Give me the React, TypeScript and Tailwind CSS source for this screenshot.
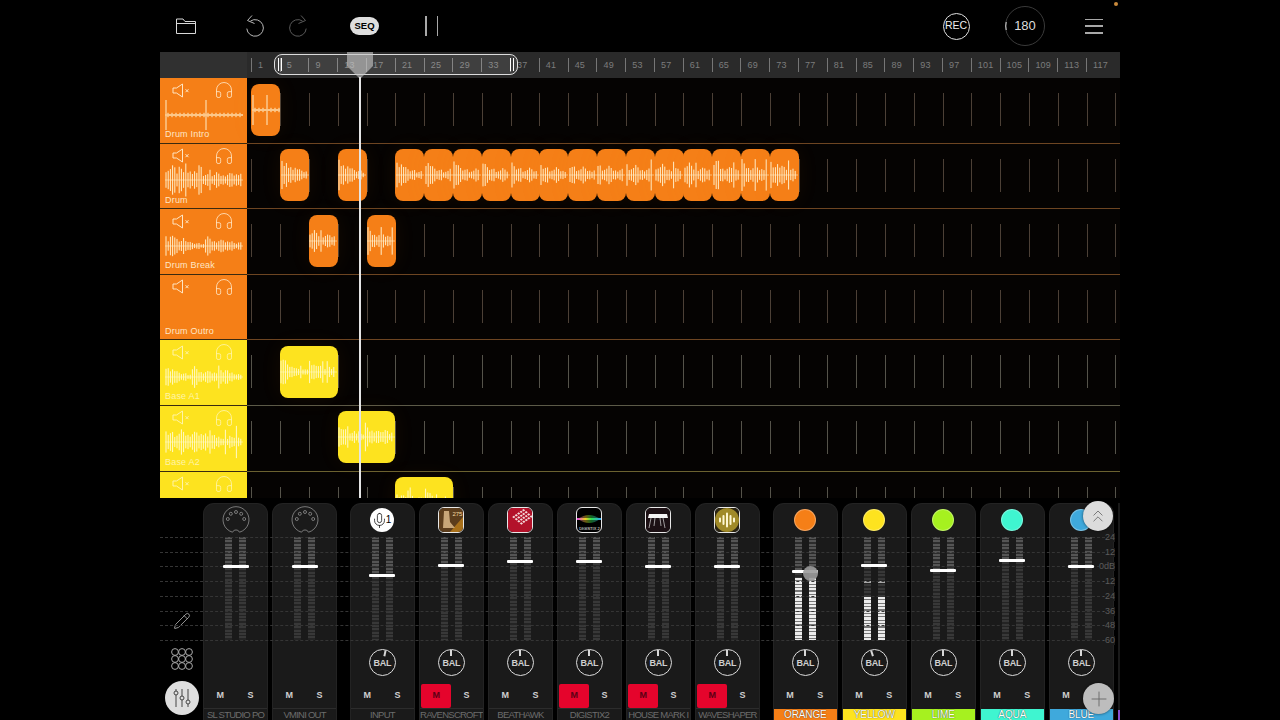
import { ChevronsUp, Headphones, Mic, Pencil, Plus } from "lucide-react";

const BAR = 28.8;
const LANE_OFFSET = 4.8;

type Track = {
  name: string;
  color: string;
  text: string;
  line: string;
  tick: string;
  waveColor: string;
  wave?: { seed: number; amp: number; beats: number; beads?: boolean };
  clips: [number, number][];
};

const orange = "#f57f17";
const yellow = "#fde31f";

const tracks: Track[] = [
  {
    name: "Drum Intro",
    color: orange,
    text: "#ffe6c4",
    line: "#6d4522",
    tick: "#4c4036",
    waveColor: "#ffeec8",
    wave: { seed: 3, amp: 3, beats: 2, beads: true },
    clips: [[0, 1]],
  },
  {
    name: "Drum",
    color: orange,
    text: "#ffe6c4",
    line: "#6d4522",
    tick: "#4c4036",
    waveColor: "#ffeec8",
    wave: { seed: 7, amp: 17, beats: 1 },
    clips: [
      [1, 1],
      [3, 1],
      ...Array.from({ length: 14 }, (_, i): [number, number] => [5 + i, 1]),
    ],
  },
  {
    name: "Drum Break",
    color: orange,
    text: "#ffe6c4",
    line: "#6d4522",
    tick: "#4c4036",
    waveColor: "#ffeec8",
    wave: { seed: 11, amp: 11, beats: 2 },
    clips: [
      [2, 1],
      [4, 1],
    ],
  },
  {
    name: "Drum Outro",
    color: orange,
    text: "#ffe6c4",
    line: "#6d4522",
    tick: "#4c4036",
    waveColor: "#ffeec8",
    clips: [],
  },
  {
    name: "Base A1",
    color: yellow,
    text: "#fff4a8",
    line: "#5c5a48",
    tick: "#55534a",
    waveColor: "#fff9c8",
    wave: { seed: 17, amp: 13, beats: 3 },
    clips: [[1, 2]],
  },
  {
    name: "Base A2",
    color: yellow,
    text: "#fff4a8",
    line: "#6b6230",
    tick: "#55534a",
    waveColor: "#fff9c8",
    wave: { seed: 23, amp: 17, beats: 1 },
    clips: [[3, 2]],
  },
  {
    name: "",
    color: yellow,
    text: "#fff4a8",
    line: "#6b6230",
    tick: "#55534a",
    waveColor: "#fff9c8",
    clips: [[5, 2]],
  },
];

type Strip = {
  label: string;
  icon: string;
  fader: number;
  bal?: number;
  muted?: boolean;
  color?: string;
  lit?: number;
  peak?: number;
  touch?: boolean;
};

const groupA: Strip[] = [
  { label: "SL STUDIO PO", icon: "midi", fader: 565 },
  { label: "VMINI OUT", icon: "midi", fader: 565 },
];

const groupB: Strip[] = [
  { label: "INPUT", icon: "mic", fader: 574, bal: 12 },
  { label: "RAVENSCROFT", icon: "raven", fader: 564, bal: 0, muted: true },
  { label: "BEATHAWK", icon: "beathawk", fader: 560, bal: 0 },
  { label: "DIGISTIX2", icon: "digistix", fader: 560, bal: 0, muted: true },
  { label: "HOUSE MARK I", icon: "house", fader: 565, bal: 0, muted: true },
  { label: "WAVESHAPER", icon: "wave", fader: 565, bal: 0, muted: true },
];

const groupC: Strip[] = [
  { label: "ORANGE", icon: "dot", color: "#f57f17", fader: 570, bal: 0, lit: 578, touch: true },
  { label: "YELLOW", icon: "dot", color: "#fde31f", fader: 564, bal: -18, lit: 597, peak: 581 },
  { label: "LIME", icon: "dot", color: "#a6f11f", fader: 569, bal: 0 },
  { label: "AQUA", icon: "dot", color: "#3ff5d0", fader: 559, bal: 0 },
  { label: "BLUE", icon: "dot", color: "#3fa9dc", fader: 565, bal: 0 },
];

const dbMarks = ["24", "12", "0dB", "-12", "-24", "-36", "-48", "-60"];

function rnd(n: number) {
  const v = Math.sin(n * 12.9898) * 43758.5453;
  return v - Math.floor(v);
}

function Wave({
  w,
  h,
  seed,
  amp,
  beats,
  beads,
  color,
}: {
  w: number;
  h: number;
  seed: number;
  amp: number;
  beats: number;
  beads?: boolean;
  color: string;
}) {
  const step = beads ? 2 : 2.2;
  const count = Math.floor(w / step);
  const mid = h / 2;
  const lines = Array.from({ length: count }, (_, i) => {
    const t = i / count;
    const phase = (t * beats) % 1;
    const r = rnd(seed + i);
    let a = amp * (0.3 + 0.7 * Math.exp(-2.2 * phase)) * (0.35 + 0.65 * r);
    if (rnd(seed * 3 + i) > 0.9) a = amp * (0.6 + 0.4 * r);
    if (beads) a = i % 2 ? 2.2 : 1;
    if (beads && phase < 0.03) a = amp * 5;
    return { x: i * step + 1, a };
  });
  return (
    <svg width={w} height={h} viewBox={`0 0 ${w} ${h}`} className="block">
      <line x1="0" x2={w} y1={mid} y2={mid} stroke={color} strokeWidth="0.6" />
      {lines.map((l) => (
        <line
          key={l.x}
          x1={l.x}
          x2={l.x}
          y1={mid - l.a}
          y2={mid + l.a}
          stroke={color}
          strokeWidth="1"
        />
      ))}
    </svg>
  );
}

function SpeakerMuted({ color }: { color: string }) {
  return (
    <svg width="18" height="15" viewBox="0 0 18 15" fill="none" stroke={color}>
      <path d="M1 5 H4.5 L10.5 1 V14 L4.5 10 H1 Z" strokeWidth="1" strokeLinejoin="round" />
      <path d="M13.5 6.2 L16.5 9.2 M16.5 6.2 L13.5 9.2" strokeWidth="1" />
    </svg>
  );
}

function TrackHeader({ track }: { track: Track }) {
  return (
    <div
      className="w-[86.5px] shrink-0 h-full flex flex-col pt-[4px] overflow-hidden border-b border-b-[#3a2a10]"
      style={{ backgroundColor: track.color }}
    >
      <div className="h-[16px] flex items-center justify-between pl-[12px] pr-[12.5px]">
        <SpeakerMuted color={track.text} />
        <Headphones size={20} strokeWidth={1} color={track.text} />
      </div>
      <div className="h-[31px] mt-[1px] pl-[5px] flex items-center">
        {track.wave && (
          <Wave w={78} h={36} color={track.waveColor} {...track.wave} />
        )}
      </div>
      <div
        className="text-[9px] leading-[9px] pl-[5px] tracking-[0.2px]"
        style={{ color: track.text }}
      >
        {track.name}
      </div>
    </div>
  );
}

function Lane({ track, row }: { track: Track; row: number }) {
  return (
    <div className="relative flex-1 h-full border-b" style={{ borderColor: track.line }}>
      {Array.from({ length: 31 }, (_, i) => (
        <div
          key={i}
          className="absolute top-[15px] h-[33px] w-px"
          style={{ left: LANE_OFFSET + i * BAR, backgroundColor: track.tick }}
        />
      ))}
      {track.clips.map(([start, len], i) => (
        <div
          key={i}
          className="absolute top-[5.5px] h-[52px] rounded-[8px] flex items-center justify-center overflow-hidden shadow-[0_0_22px_rgba(245,127,23,0.07)]"
          style={{
            left: LANE_OFFSET + start * BAR,
            width: len * BAR + 0.2,
            backgroundColor: track.color,
          }}
        >
          <Wave
            w={Math.round(len * BAR) - 1}
            h={36}
            seed={row * 13 + start}
            amp={row === 0 ? 3 : row === 2 ? 14 : 16}
            beats={row === 0 ? 2 : len}
            beads={row === 0}
            color={track.waveColor}
          />
        </div>
      ))}
    </div>
  );
}

function Ruler() {
  return (
    <div className="h-[26px] flex bg-[#2a2a2a]">
      <div className="w-[86.5px] shrink-0 bg-[#303030]" />
      <div className="flex-1 flex pl-[4.4px] items-center overflow-hidden">
        {Array.from({ length: 30 }, (_, i) => (
          <div key={i} className="w-[28.8px] shrink-0 h-[14px] border-l-[1.5px] border-l-[#767676] pl-[6px] flex items-center">
            <span className="text-[9px] leading-none text-[#7c7c7c] tracking-[0.2px]">
              {i * 4 + 1}
            </span>
          </div>
        ))}
      </div>
    </div>
  );
}

function MidiIcon() {
  return (
    <svg width="28" height="28" viewBox="0 0 28 28" fill="none" stroke="#a0a0a0" strokeWidth="0.7">
      <path d="M10.5 26.2 A13 13 0 1 1 17.5 26.2 C16.6 24.6 15.6 24 14 24 C12.4 24 11.4 24.6 10.5 26.2 Z" />
      <circle cx="5.8" cy="13" r="1.5" />
      <circle cx="8.8" cy="7.8" r="1.5" />
      <circle cx="14" cy="6" r="1.5" />
      <circle cx="19.2" cy="7.8" r="1.5" />
      <circle cx="22.2" cy="13" r="1.5" />
    </svg>
  );
}

function PluginIcon({ kind, color }: { kind: string; color?: string }) {
  if (kind === "midi") return <MidiIcon />;
  if (kind === "dot")
    return (
      <div
        className="w-[22px] h-[22px] rounded-full border border-white/30"
        style={{ backgroundColor: color }}
      />
    );
  if (kind === "mic")
    return (
      <div className="w-[24px] h-[24px] rounded-full bg-white flex items-center justify-center text-black">
        <Mic size={17} strokeWidth={1} className="-ml-[3px]" />
        <span className="text-[10px] leading-none -ml-[2px]">1</span>
      </div>
    );
  return (
    <div className="w-[26px] h-[26px] rounded-[6px] border border-[#e8e8e8] overflow-hidden bg-black">
      {kind === "raven" && (
        <div className="w-full h-full relative bg-[#5c3d1c]">
          <svg width="24" height="24" viewBox="0 0 24 24" className="absolute inset-0">
            <path d="M24 9 V24 H11 Z" fill="#a8701a" />
            <path d="M5 3 H10 L11 14 L16 20 H4 Z" fill="#c8a678" />
          </svg>
          <span className="absolute top-[3px] right-[1px] text-[6px] leading-none text-[#f5d9a0]">275</span>
        </div>
      )}
      {kind === "beathawk" && (
        <svg width="24" height="24" viewBox="0 0 24 24">
          <rect width="24" height="24" fill="#b3122a" />
          <g fill="#f4dada" transform="rotate(-35 12 12) skewX(15)">
            {[0, 1, 2, 3, 4].flatMap((r) =>
              [0, 1, 2, 3].map((c) => (
                <rect key={`${r}-${c}`} x={6 + r * 3} y={5 + c * 3.2} width="2" height="2" />
              )),
            )}
          </g>
        </svg>
      )}
      {kind === "digistix" && (
        <div className="relative w-full h-full">
          <svg width="24" height="24" viewBox="0 0 24 24">
            <defs>
              <linearGradient id="dgx" x1="0" x2="1" y1="0" y2="0">
                <stop offset="0" stopColor="#e040e0" />
                <stop offset="0.35" stopColor="#f0d020" />
                <stop offset="0.6" stopColor="#30e050" />
                <stop offset="1" stopColor="#30a0f0" />
              </linearGradient>
            </defs>
            <path d="M1 11 Q12 3 23 11 Q12 19 1 11 Z" fill="url(#dgx)" opacity="0.45" />
            <rect x="0" y="10" width="24" height="2" fill="url(#dgx)" />
          </svg>
          <span className="absolute bottom-[1px] inset-x-0 text-center text-[4px] leading-none text-white">
            DIGISTIX 2
          </span>
        </div>
      )}
      {kind === "house" && (
        <svg width="24" height="24" viewBox="0 0 24 24" fill="none">
          <rect width="24" height="24" fill="#1c1014" />
          <path d="M3 6 H21 L22 10 H2 Z" fill="#f4f4f4" />
          <path d="M5 10 L3 20 M9 10 L8 18 M17 10 L19 20 M14 10 L15 18" stroke="#d8d8d8" strokeWidth="0.7" />
        </svg>
      )}
      {kind === "wave" && (
        <svg width="24" height="24" viewBox="0 0 24 24">
          <rect width="24" height="24" fill="#2a2412" />
          <circle cx="12" cy="12" r="12" fill="#a08a28" />
          <g stroke="#fdf6d0" strokeWidth="2" strokeLinecap="round">
            <path d="M5 10.5 V13.5 M8.5 8 V16 M12 5.5 V18.5 M15.5 8 V16 M19 10.5 V13.5" />
          </g>
        </svg>
      )}
    </div>
  );
}

function Meter({ strip }: { strip: Strip }) {
  const top = strip.fader - 537;
  return (
    <div className="relative w-[7px] h-[103px] flex flex-col">
      <div
        className="bg-[repeating-linear-gradient(to_bottom,#555_0_2px,#2c2c2c_2px_3.4px)]"
        style={{ height: top }}
      />
      <div className="flex-1 bg-[repeating-linear-gradient(to_bottom,#383838_0_2px,#242424_2px_3.4px)]" />
      {strip.lit && (
        <div
          className="absolute bottom-0 inset-x-0 bg-[repeating-linear-gradient(to_bottom,#ececec_0_2.2px,#777_2.2px_3.4px)]"
          style={{ height: 640 - strip.lit }}
        />
      )}
      {strip.peak && (
        <div
          className="absolute inset-x-0 h-[2px] bg-[#a8a8a8]"
          style={{ top: strip.peak - 537 }}
        />
      )}
    </div>
  );
}

function Knob({ angle }: { angle: number }) {
  return (
    <div className="relative w-[27px] h-[27px] rounded-full border-[1.5px] border-[#dcdcdc] flex items-center justify-center">
      <div className="absolute inset-0" style={{ transform: `rotate(${angle}deg)` }}>
        <div className="w-[2px] h-[6px] bg-[#d8d8d8] mx-auto" />
      </div>
      <span className="text-[9px] leading-none text-[#cfcfcf] font-bold pt-[2px] tracking-[-0.2px]">BAL</span>
    </div>
  );
}

function ChannelStrip({ strip }: { strip: Strip }) {
  return (
    <div className="w-[64.5px] shrink-0 h-[217.5px] rounded-t-[11px] bg-[#1a1a1a] border-t border-x border-[#232323] flex flex-col items-center pt-[3.5px]">
      <div className="h-[26px] flex items-center justify-center">
        <PluginIcon kind={strip.icon} color={strip.color} />
      </div>
      <div className="relative mt-[4px] flex justify-center gap-[7px] w-full">
        <Meter strip={strip} />
        <Meter strip={strip} />
        <div
          className="absolute z-10 left-1/2 -translate-x-1/2 w-[26px] h-[3px] rounded-[1px] bg-white"
          style={{ top: strip.fader - 537 }}
        />
        {strip.touch && (
          <div className="absolute z-20 left-[29px] top-[28.5px] w-[15px] h-[15px] rounded-full bg-[#9a9a9a]/90" />
        )}
      </div>
      <div className="h-[27px] mt-[8.5px]">
        {strip.bal !== undefined && <Knob angle={strip.bal} />}
      </div>
      <div className="mt-[8.5px] h-[24px] w-full flex px-[1px] text-[9px] font-bold">
        <div
          className={`w-[30px] rounded-[2px] flex items-center justify-center ${
            strip.muted ? "bg-[#e5042c] text-[#5c0014]" : "text-[#cfcfcf]"
          }`}
        >
          M
        </div>
        <div className="flex-1 flex items-center justify-center text-[#cfcfcf]">S</div>
      </div>
      <div
        className={`w-full h-[12px] flex items-center justify-center leading-none whitespace-nowrap overflow-hidden ${
          strip.color
            ? "text-[10px] tracking-[-0.1px] text-white border-t-[1.5px] border-t-[#1a1a1a]"
            : "text-[9.5px] tracking-[-0.75px] border-t border-t-[#2c2c2c] text-[#6c6c6c]"
        }`}
        style={
          strip.color
            ? {
                backgroundColor: strip.color,
                textShadow: "0 0 1px rgba(0,0,0,0.9)",
              }
            : undefined
        }
      >
        {strip.label}
      </div>
    </div>
  );
}

function ToolColumn() {
  return (
    <div className="w-[43.3px] shrink-0 flex flex-col items-center pt-[109.5px]">
      <Pencil size={18} strokeWidth={1} color="#c4c4c4" />
      <svg width="22" height="22" viewBox="0 0 22 22" fill="none" stroke="#a8a8a8" strokeWidth="1" className="mt-[18px]">
        {[4, 11, 18].flatMap((y) =>
          [4, 11, 18].map((x) => <circle key={`${x}-${y}`} cx={x} cy={y} r="3.4" />),
        )}
      </svg>
      <div className="mt-[11px] w-[34px] h-[34px] rounded-full bg-[#dedede] flex items-center justify-center">
        <svg width="20" height="20" viewBox="0 0 20 20" fill="none" stroke="#444" strokeWidth="1">
          <path d="M4 1 V19 M10 1 V19 M16 1 V19" />
          <circle cx="4" cy="5" r="2" fill="#dedede" />
          <circle cx="10" cy="10" r="2" fill="#dedede" />
          <circle cx="16" cy="14" r="2" fill="#dedede" />
        </svg>
      </div>
    </div>
  );
}

function Mixer() {
  return (
    <div className="relative h-[222px] bg-black overflow-hidden flex pt-[4.5px]">
      <ToolColumn />
      <div className="flex gap-[13.4px]">
        {[groupA, groupB, groupC].map((group, g) => (
          <div key={g} className="flex gap-[4.5px]">
            {group.map((s) => (
              <ChannelStrip key={s.label} strip={s} />
            ))}
            {g === 2 && (
              <div className="w-[2px] h-[217.5px] bg-[#1a1a1a] flex flex-col justify-end">
                <div className="h-[10px] bg-[#8a4fd0]" />
              </div>
            )}
          </div>
        ))}
      </div>

      <div className="absolute left-0 w-[955px] top-[39px] h-[104px] flex flex-col justify-between pointer-events-none">
        {dbMarks.map((m) => (
          <div key={m} className="relative border-t border-dashed border-t-[#353535]">
            <span className="absolute right-[0px] -top-[5px] text-[9px] leading-[9px] text-[#5c5c5c] bg-[#1a1a1a]">
              {m}
            </span>
          </div>
        ))}
      </div>

      <div className="absolute z-30 left-[923px] top-[3px] w-[30px] h-[30px] rounded-full bg-[#dcdcdc] shadow-[0_0_3px_rgba(0,0,0,0.6)] flex items-center justify-center">
        <ChevronsUp size={20} strokeWidth={1} color="#666" />
      </div>
      <div className="absolute z-30 left-[923px] top-[185px] w-[31px] h-[31px] rounded-full bg-[#bdbdbd] shadow-[0_0_3px_rgba(0,0,0,0.6)] flex items-center justify-center">
        <Plus size={24} strokeWidth={0.9} color="#666" />
      </div>
    </div>
  );
}

function TopBar() {
  return (
    <div className="relative h-[52px] flex items-center pl-[16px] pr-[17px] bg-black">
      <svg width="20" height="16" viewBox="0 0 20 16" fill="none" stroke="#d8d8d8" strokeWidth="1">
        <path d="M0.5 15.5 V1 H7 L9 3.5 H19.5 V15.5 Z M0.5 5.5 H19.5" />
      </svg>
      <svg width="18" height="23" viewBox="0 0 18 23" fill="none" stroke="#b8b8b8" strokeWidth="1" className="ml-[50px]">
        <path d="M4.5 6 A8.3 8.3 0 1 1 0.8 13.6" />
        <path d="M6 0.5 L1.5 5.5 L8.5 8.5" />
      </svg>
      <svg width="18" height="23" viewBox="0 0 18 23" fill="none" stroke="#5a5a5a" strokeWidth="1" className="ml-[25px] -scale-x-100">
        <path d="M4.5 6 A8.3 8.3 0 1 1 0.8 13.6" />
        <path d="M6 0.5 L1.5 5.5 L8.5 8.5" />
      </svg>
      <div className="ml-[43px] w-[29px] h-[18px] rounded-full bg-[#dedede] flex items-center justify-center text-[9.5px] font-bold text-black">
        SEQ
      </div>
      <div className="ml-[46px] w-[13px] h-[20px] flex justify-between">
        <div className="w-[1.5px] bg-[#a8a8a8]" />
        <div className="w-[1.5px] bg-[#a8a8a8]" />
      </div>
      <div className="ml-auto w-[27px] h-[27px] rounded-full border border-[#e0e0e0] flex items-center justify-center text-[10.5px] text-[#eee]">
        REC
      </div>
      <div className="relative ml-[35.5px] w-[40px] h-[40px] rounded-full border border-[#3a3a3a] flex items-center justify-center text-[13px] text-[#ddd]">
        <svg width="40" height="40" viewBox="0 0 40 40" fill="none" className="absolute -inset-px">
          <path d="M1.2 24 A19.5 19.5 0 0 1 1.2 16" stroke="#ddd" strokeWidth="1" />
        </svg>
        180
      </div>
      <div className="ml-[40px] w-[18px] h-[15px] flex flex-col justify-between">
        <div className="h-[1.5px] bg-[#a8a8a8]" />
        <div className="h-[1.5px] bg-[#a8a8a8]" />
        <div className="h-[1.5px] bg-[#a8a8a8]" />
      </div>
      <div className="absolute left-[953.5px] top-[2px] w-[4px] h-[4px] rounded-full bg-[#c98a3c]" />
    </div>
  );
}

function Timeline() {
  return (
    <div className="relative">
      <Ruler />
      <div className="h-[420px] overflow-hidden bg-[#050302]">
        {tracks.map((t, i) => (
          <div key={i} className="h-[65.6px] flex">
            <TrackHeader track={t} />
            <Lane track={t} row={i} />
          </div>
        ))}
      </div>

      <div className="absolute left-[113.5px] top-[2px] w-[244px] h-[21px] rounded-[8px] border-[1.5px] border-[#dcdcdc] bg-white/10 flex items-center justify-between px-[3px]">
        <div className="w-[4px] h-[13px] border-x border-x-white" />
        <div className="w-[4px] h-[13px] border-x border-x-white" />
      </div>

      <svg width="28" height="27" viewBox="0 0 28 27" className="absolute left-[186px] top-0">
        <path d="M1 0 H27 V14 L15 26 H13 L1 14 Z" fill="#c8c8c8" fillOpacity="0.62" />
      </svg>
      <div className="absolute left-[199.2px] top-[25px] w-[1.8px] h-[421px] bg-[#e4e4e4]" />
    </div>
  );
}

export default function App() {
  return (
    <div className="w-[1280px] h-[720px] bg-black flex justify-center overflow-hidden [font-family:'Liberation_Sans',Arial,sans-serif]">
      <div className="w-[960px] h-full flex flex-col overflow-hidden">
        <TopBar />
        <Timeline />
        <Mixer />
      </div>
    </div>
  );
}
